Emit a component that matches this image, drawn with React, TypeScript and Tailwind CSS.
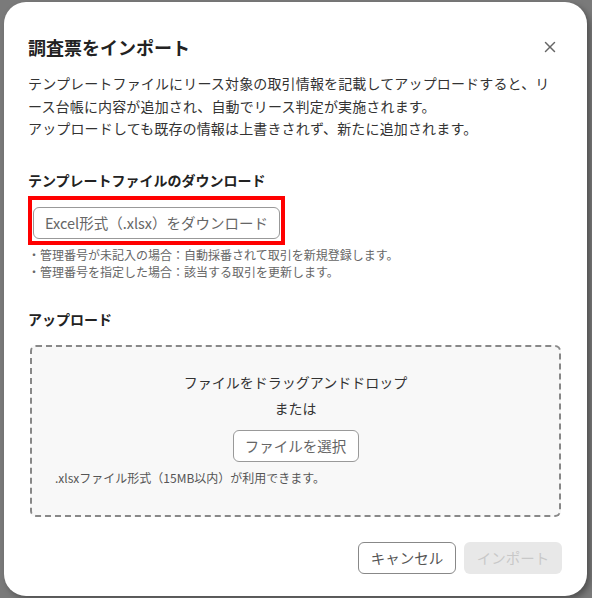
import { X } from "lucide-react";

const notes = [
  "・管理番号が未記入の場合：自動採番されて取引を新規登録します。",
  "・管理番号を指定した場合：該当する取引を更新します。",
];

const App = () => {
  return (
    <div
      className="w-[592px] h-[598px] bg-[#7a7a7a] pt-[2px] pl-[4px] overflow-hidden"
      style={{ fontFamily: '"Noto Sans CJK JP", "Noto Sans", sans-serif' }}
    >
      <div className="w-[583px] h-[594px] bg-white rounded-[22px] shadow-[3px_3px_6px_rgba(0,0,0,0.35)] px-[24px] pt-[30px] flex flex-col">
        <div className="flex items-center justify-between">
          <h2 className="text-[18px] leading-[30px] font-bold text-[#222]">調査票をインポート</h2>
          <X className="w-[18px] h-[18px] text-[#666] mr-[4px]" strokeWidth={2} />
        </div>

        <div className="mt-[10px] text-[14px] leading-[22.5px] text-[#333] tracking-[0.15px]">
          <p>テンプレートファイルにリース対象の取引情報を記載してアップロードすると、リース台帳に内容が追加され、自動でリース判定が実施されます。</p>
          <p>アップロードしても既存の情報は上書きされず、新たに追加されます。</p>
        </div>

        <h3 className="mt-[30px] text-[14px] leading-[20px] font-bold text-[#222]">テンプレートファイルのダウンロード</h3>
        <div className="mt-[6px] w-[257px] border-[4px] border-[#ff0000] pt-[7px] pb-[2px] pl-[1px]">
          <button className="w-[247px] h-[32px] rounded-[6px] border border-[#999] text-[14.5px] text-[#666] bg-white">
            Excel形式（.xlsx）をダウンロード
          </button>
        </div>
        <div className="mt-[1px] text-[12px] leading-[17px] text-[#666]">
          {notes.map((n, i) => (
            <p key={i}>{n}</p>
          ))}
        </div>

        <h3 className="mt-[29px] text-[14px] leading-[20px] font-bold text-[#222]">アップロード</h3>
        <div className="mt-[16px] mx-[2px] h-[172px] border-2 border-dashed border-[#888] rounded-[6px] bg-[#f8f8f8] flex flex-col items-center pt-[22px]">
          <p className="text-[14px] leading-[26px] text-[#333]">ファイルをドラッグアンドドロップ</p>
          <p className="text-[14px] leading-[26px] text-[#333]">または</p>
          <button className="mt-[9px] w-[126px] h-[32px] rounded-[6px] border border-[#999] bg-white text-[14.5px] text-[#666]">
            ファイルを選択
          </button>
          <p className="self-start ml-[23px] mt-[7px] text-[12px] leading-[17px] text-[#555]">
            .xlsxファイル形式（15MB以内）が利用できます。
          </p>
        </div>

        <div className="mt-[25px] flex justify-end gap-[8px] pr-[1px]">
          <button className="w-[98px] h-[32px] rounded-[6px] border border-[#888] bg-white text-[14.5px] text-[#555]">
            キャンセル
          </button>
          <button className="w-[98px] h-[32px] rounded-[6px] bg-[#e8e8e8] text-[14.5px] text-[#c8c8c8]">
            インポート
          </button>
        </div>
      </div>
    </div>
  );
};

export default App;
